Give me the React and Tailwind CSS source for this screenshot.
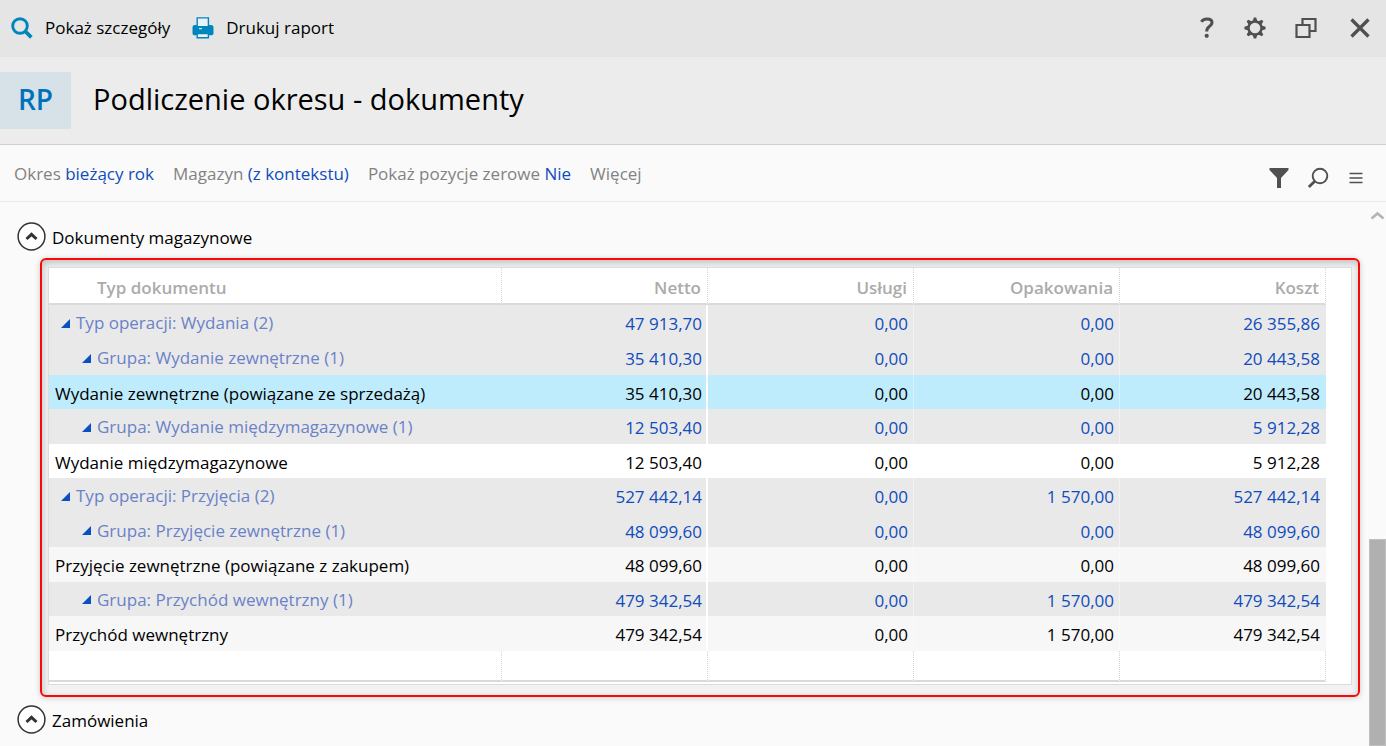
const rows = [
    { kind: "group", level: 1, name: "Typ operacji: Wydania (2)", values: ["47 913,70", "0,00", "0,00", "26 355,86"] },
    { kind: "group", level: 2, name: "Grupa: Wydanie zewnętrzne (1)", values: ["35 410,30", "0,00", "0,00", "20 443,58"] },
    { kind: "selected", name: "Wydanie zewnętrzne (powiązane ze sprzedażą)", values: ["35 410,30", "0,00", "0,00", "20 443,58"] },
    { kind: "group", level: 2, name: "Grupa: Wydanie międzymagazynowe (1)", values: ["12 503,40", "0,00", "0,00", "5 912,28"] },
    { kind: "plain", name: "Wydanie międzymagazynowe", values: ["12 503,40", "0,00", "0,00", "5 912,28"] },
    { kind: "group", level: 1, name: "Typ operacji: Przyjęcia (2)", values: ["527 442,14", "0,00", "1 570,00", "527 442,14"] },
    { kind: "group", level: 2, name: "Grupa: Przyjęcie zewnętrzne (1)", values: ["48 099,60", "0,00", "0,00", "48 099,60"] },
    { kind: "striped", name: "Przyjęcie zewnętrzne (powiązane z zakupem)", values: ["48 099,60", "0,00", "0,00", "48 099,60"] },
    { kind: "group", level: 2, name: "Grupa: Przychód wewnętrzny (1)", values: ["479 342,54", "0,00", "1 570,00", "479 342,54"] },
    { kind: "striped", name: "Przychód wewnętrzny", values: ["479 342,54", "0,00", "1 570,00", "479 342,54"] },
];

const cellStyles = {
    group: "bg-[#e9e9e9] text-[#0f4cbd]",
    selected: "bg-[#beecfd] text-black",
    plain: "bg-white text-black",
    striped: "bg-[#f7f7f7] text-black",
};

// line on the right side of each value column
const dividers = [
    "border-r-2 border-white pr-1",
    "border-r border-white/40 pr-[5px]",
    "border-r border-white/40 pr-[5px]",
    "pr-[6px]",
];

function SearchIcon() {
    return (
        <svg width="22" height="22" viewBox="0 0 22 22" fill="none" stroke="#0086bd">
            <circle cx="9" cy="9" r="7.3" strokeWidth="2.9" />
            <path d="M14.5 14.5l5.8 5.8" strokeWidth="3.8" />
        </svg>
    );
}

function PrinterIcon() {
    return (
        <svg width="22" height="22" viewBox="0 0 22 22">
            <path d="M2.5 8h17A2.3 2.3 0 0 1 21.5 10.3V16.5a1.8 1.8 0 0 1-1.8 1.8H2.3A1.8 1.8 0 0 1 .5 16.5V10.3A2.3 2.3 0 0 1 2.5 8z" fill="#0086bd" />
            <path d="M5.2 .9h11.2v10H5.2z" fill="#e9f2f6" stroke="#0086bd" strokeWidth="1.4" />
            <path d="M4.5 9h12.6v4H4.5z" fill="#0086bd" />
            <path d="M7 11.7h3" stroke="#fff" strokeWidth="1" />
            <path d="M5.2 16.5h11.2v4.3H5.2z" fill="#e9f2f6" stroke="#0086bd" strokeWidth="1.4" />
        </svg>
    );
}

function HelpIcon() {
    return (
        <svg width="14" height="22" viewBox="0 0 14 22" fill="none" stroke="#505050" strokeWidth="3">
            <path d="M1.5 4.8C2.5 2.8 4.5 2 7 2c3.2 0 5 1.3 5 3.6 0 2.1-1.3 3-2.9 4.1C7.4 10.9 6.7 12 6.7 14.5" />
            <circle cx="6.7" cy="18.8" r="2.1" fill="#505050" stroke="none" />
        </svg>
    );
}

function GearIcon() {
    return (
        <svg width="22" height="22" viewBox="0 0 22 22" stroke="#505050" fill="none">
            <circle cx="11" cy="11" r="6.5" strokeWidth="2.4" />
            {[0, 45, 90, 135, 180, 225, 270, 315].map((a) => (
                <path key={a} d="M8.6 4.5L9.8 .4h2.4L13.4 4.5z" fill="#505050" stroke="none" transform={`rotate(${a} 11 11)`} />
            ))}
        </svg>
    );
}

function RestoreIcon() {
    return (
        <svg width="22" height="22" viewBox="0 0 22 22" fill="none" stroke="#505050" strokeWidth="2.2">
            <path d="M7.5 7.5V2h13v12h-5.5" />
            <path d="M1.5 8h13v12h-13z" />
        </svg>
    );
}

function CloseIcon() {
    return (
        <svg width="20" height="20" viewBox="0 0 20 20" fill="none" stroke="#505050" strokeWidth="3.2">
            <path d="M1.5 1.5l17 17M18.5 1.5l-17 17" />
        </svg>
    );
}

function FilterIcon() {
    return (
        <svg width="20" height="22" viewBox="0 0 20 22" fill="#505050">
            <path d="M.5 1h19v2L12 11v10H8V11L.5 3z" />
        </svg>
    );
}

function FindIcon() {
    return (
        <svg width="22" height="22" viewBox="0 0 22 22" fill="none" stroke="#505050">
            <circle cx="13" cy="9" r="7.3" strokeWidth="1.9" />
            <path d="M7.8 14.2l-6 5.8" strokeWidth="2.8" />
        </svg>
    );
}

function MenuIcon() {
    return (
        <svg width="14" height="12" viewBox="0 0 14 12" stroke="#505050" strokeWidth="1.4">
            <path d="M.5 1.5h13M.5 6h13M.5 10.5h13" />
        </svg>
    );
}

function Section({ title, children }) {
    return (
        <section>
            <button className="flex h-[29px] items-center gap-[6px] pl-[17px] text-black">
                <svg width="29" height="29" viewBox="0 0 29 29" fill="none" stroke="#333">
                    <circle cx="14.5" cy="14.5" r="13.4" strokeWidth="1.5" fill="#fff" />
                    <path d="M9.5 17l5-4.6 5 4.6" strokeWidth="3" />
                </svg>
                <span className="pt-[2px]">{title}</span>
            </button>
            {children}
        </section>
    );
}

function Filter({ label, value }) {
    return (
        <button className="text-[#828282]">
            {label} {value && <span className="text-[#0f4cbd]">{value}</span>}
        </button>
    );
}

function DocumentsTable() {
    return (
        <table className="w-full table-fixed border-separate border-spacing-0 bg-white">
            <colgroup>
                <col />
                <col className="w-[206px]" />
                <col className="w-[206px]" />
                <col className="w-[206px]" />
                <col className="w-[206px]" />
                <col className="w-[25px]" />
            </colgroup>
            <thead>
                <tr className="h-[37px] text-[#ababab]">
                    <th className="border-r border-b-2 border-r-[#d4d4d4] border-b-[#dadada] pt-1 pl-12 text-left font-semibold [border-right-style:dotted]">Typ dokumentu</th>
                    {["Netto", "Usługi", "Opakowania", "Koszt"].map((h) => (
                        <th key={h} className="border-r border-b-2 border-r-[#d4d4d4] border-b-[#dadada] pt-1 pr-[6px] text-right font-semibold [border-right-style:dotted]">{h}</th>
                    ))}
                    <td></td>
                </tr>
            </thead>
            <tbody>
                {rows.map((row) => (
                    <tr key={row.name} className="odd:h-[34px] even:h-[35px] first:h-[35px]!">
                        <td className={`p-0 ${cellStyles[row.kind]}`}>
                            {row.kind === "group" ? (
                                <button className={`flex items-center gap-[6px] pt-px text-[#6a82c8] ${row.level === 1 ? "pl-3" : "pl-[33px]"}`}>
                                    <svg width="9" height="9" viewBox="0 0 9 9">
                                        <path d="M9 0v9H0z" fill="#0b4fc4" />
                                    </svg>
                                    {row.name}
                                </button>
                            ) : (
                                <div className="pt-[3px] pl-[6px]">{row.name}</div>
                            )}
                        </td>
                        {row.values.map((value, i) => (
                            <td key={i} className={`py-0 pt-[3px] text-right ${cellStyles[row.kind]} ${dividers[i]}`}>{value}</td>
                        ))}
                        <td></td>
                    </tr>
                ))}
            </tbody>
            <tfoot>
                <tr className="h-[31px]">
                    {[0, 1, 2, 3, 4].map((i) => (
                        <td key={i} className="border-r border-b-2 border-r-[#d4d4d4] border-b-[#dadada] [border-right-style:dotted]"></td>
                    ))}
                    <td></td>
                </tr>
            </tfoot>
        </table>
    );
}

export default function App() {
    return (
        <div className="flex h-screen flex-col overflow-hidden bg-[#fafafa] font-['Open_Sans','Noto_Sans',sans-serif] text-[17px] leading-6">
            <div className="flex h-[57px] shrink-0 items-center justify-between bg-[#e5e5e5] pr-4 pb-px pl-[11px]">
                <div className="flex items-center gap-[22px]">
                    <button className="flex items-center gap-3"><SearchIcon /> Pokaż szczegóły</button>
                    <button className="flex items-center gap-3"><PrinterIcon /> Drukuj raport</button>
                </div>
                <div className="flex items-center">
                    <button aria-label="Pomoc" className="mr-[30px]"><HelpIcon /></button>
                    <button aria-label="Ustawienia" className="mr-[29px]"><GearIcon /></button>
                    <button aria-label="Przywróć" className="mr-[33px]"><RestoreIcon /></button>
                    <button aria-label="Zamknij"><CloseIcon /></button>
                </div>
            </div>

            <header className="flex h-[88px] shrink-0 items-center gap-[22px] border-b border-[#d0d0d0] bg-[#ececec]">
                <div className="flex h-[57px] w-[71px] items-center justify-center bg-[#d7e1e8] pb-1 text-[28px] font-semibold text-[#0072bc]">RP</div>
                <h1 className="pb-1 text-[29px] leading-10">Podliczenie okresu - dokumenty</h1>
            </header>

            <div className="flex h-[57px] shrink-0 items-center justify-between border-b border-[#e9e9e9] pt-px pr-[23px] pl-[14px]">
                <div className="flex gap-[19px]">
                    <Filter label="Okres" value="bieżący rok" />
                    <Filter label="Magazyn" value="(z kontekstu)" />
                    <Filter label="Pokaż pozycje zerowe" value="Nie" />
                    <Filter label="Więcej" />
                </div>
                <div className="flex items-center pt-2">
                    <button aria-label="Filtruj" className="mr-[18px]"><FilterIcon /></button>
                    <button aria-label="Szukaj" className="mr-5"><FindIcon /></button>
                    <button aria-label="Menu"><MenuIcon /></button>
                </div>
            </div>

            <div className="flex min-h-0 flex-1">
                <main className="min-w-0 flex-1 overflow-hidden pt-5">
                    <Section title="Dokumenty magazynowe">
                        <div className="mt-[7px] mr-[9px] mb-2 ml-10 rounded-md border-2 border-[#fa0808] bg-[#f2f2f2] px-[6px] pt-[7px] pb-[10px] shadow-[0_1px_6px_rgba(0,0,0,0.18),inset_1px_3px_7px_rgba(0,0,0,0.2)]">
                            <div className="border border-[#dcdcdc] bg-white pb-[2px]">
                                <DocumentsTable />
                            </div>
                        </div>
                    </Section>
                    <Section title="Zamówienia" />
                </main>
                <div className="flex w-[17px] shrink-0 flex-col items-center justify-between">
                    <svg className="mt-[9px]" width="13" height="9" viewBox="0 0 13 9" fill="none" stroke="#b4b4b4" strokeWidth="2.6">
                        <path d="M.5 7.5l6-5 6 5" />
                    </svg>
                    <div className="h-[38%] w-full border border-[#c0c0c0] bg-[#b0b0b0]"></div>
                </div>
            </div>
        </div>
    );
}
